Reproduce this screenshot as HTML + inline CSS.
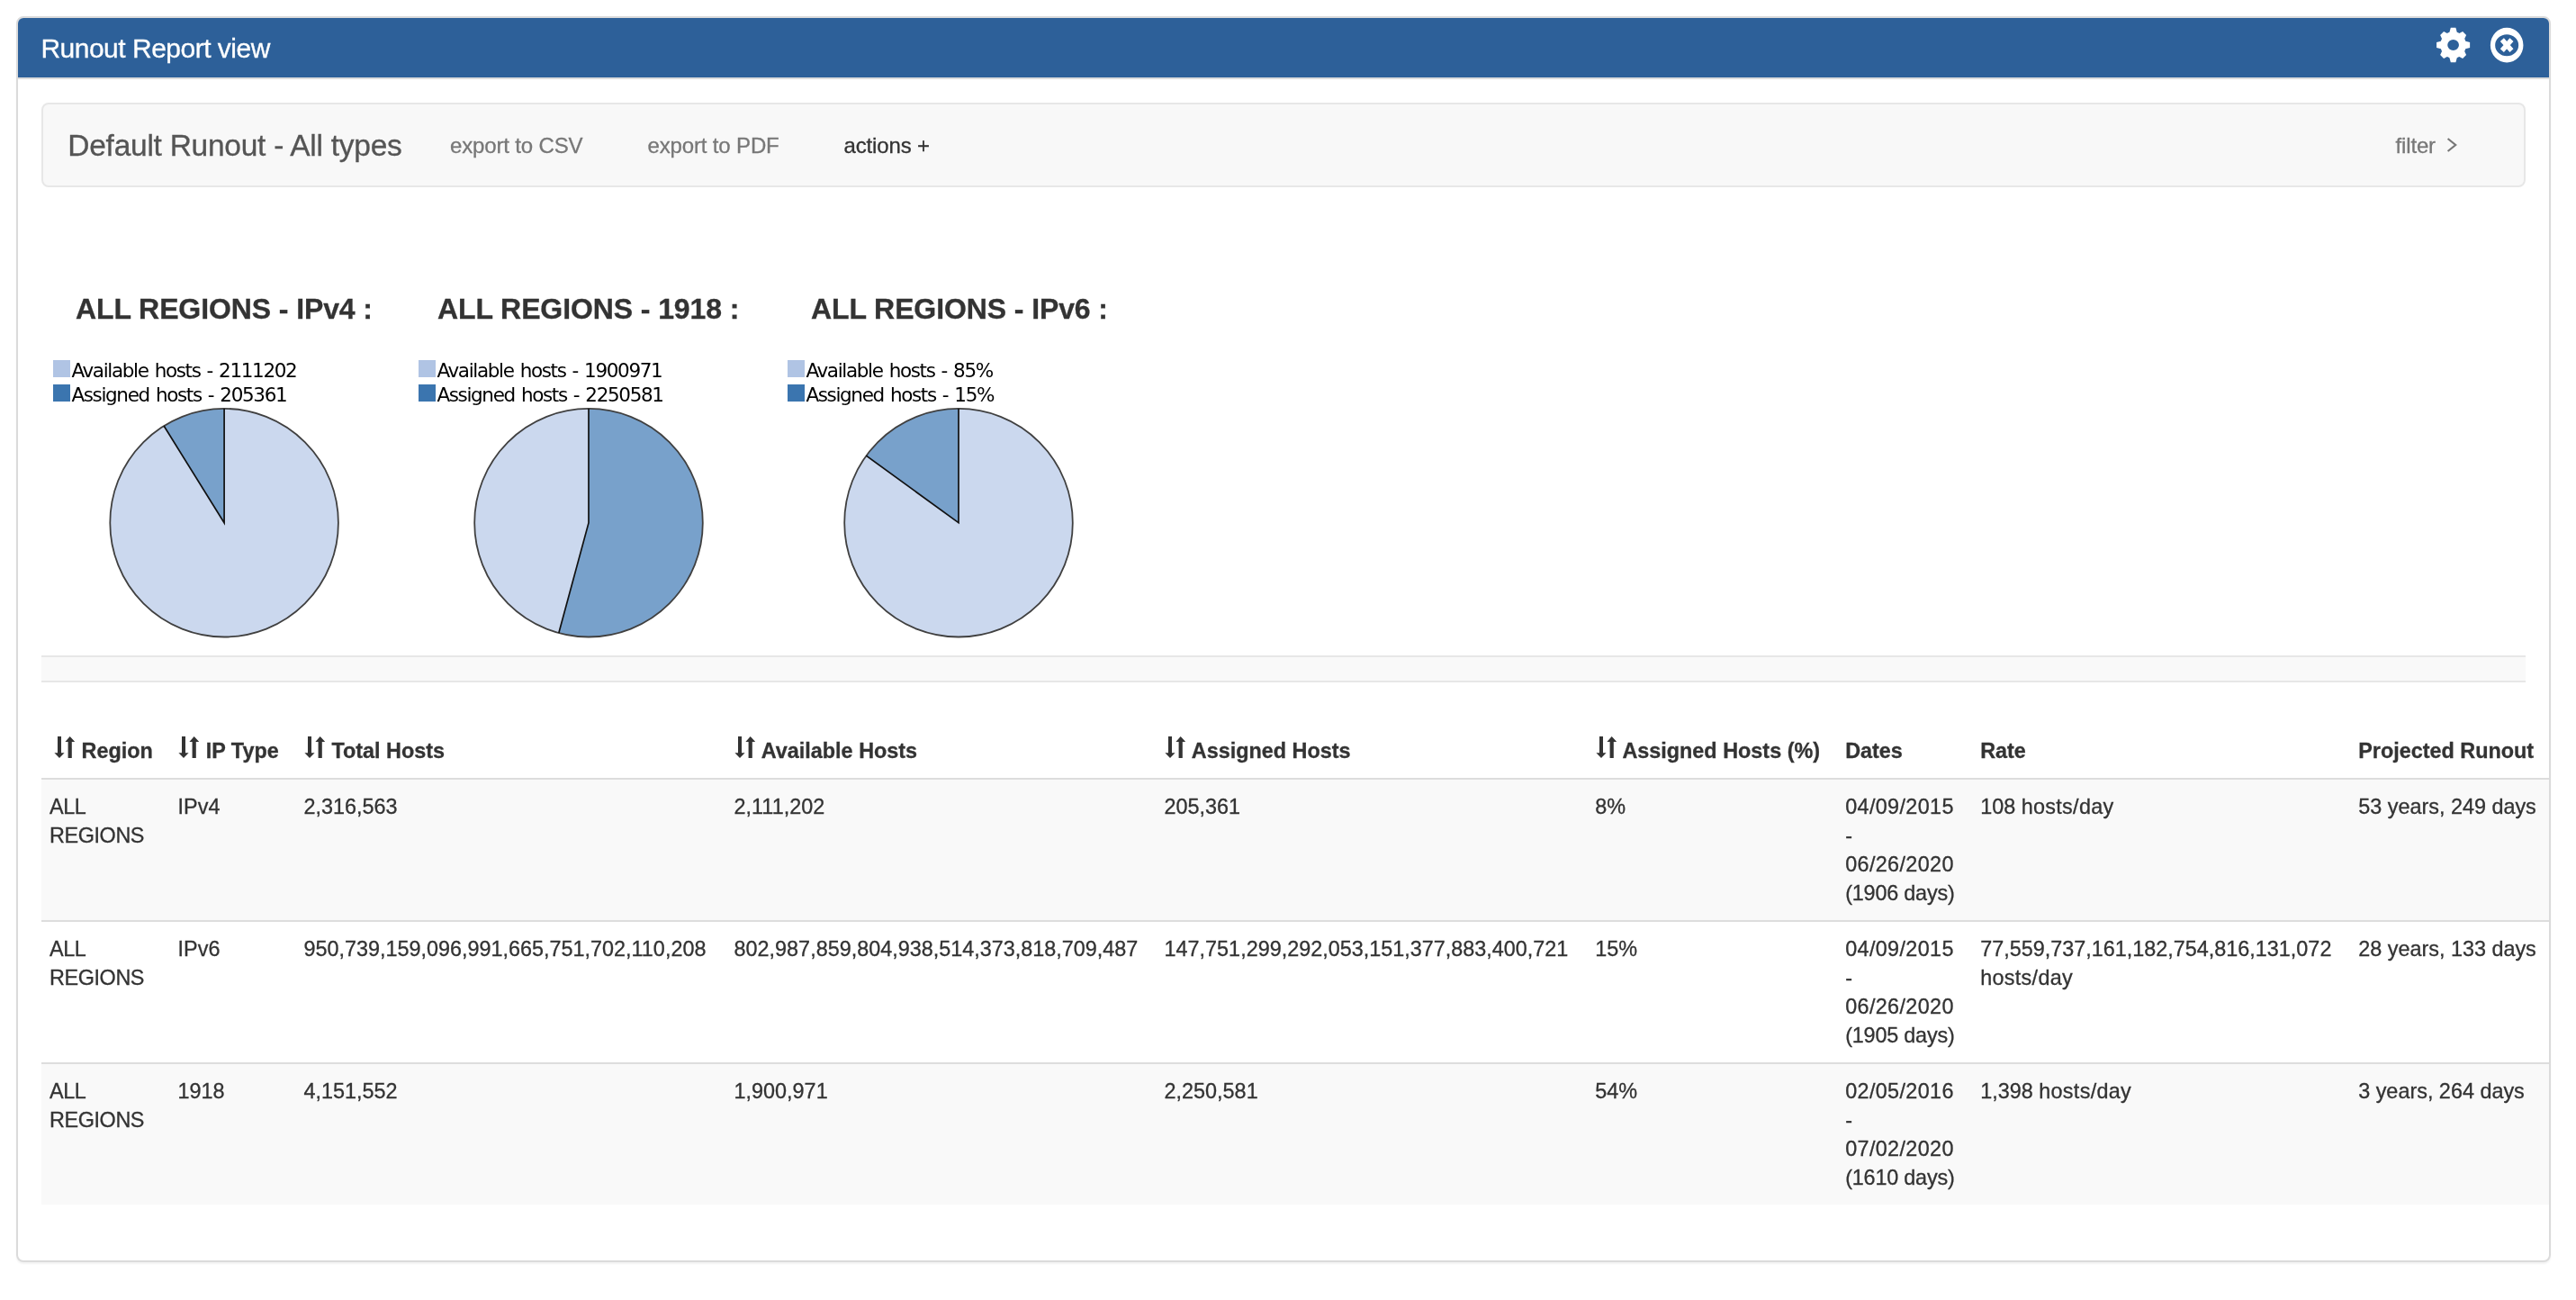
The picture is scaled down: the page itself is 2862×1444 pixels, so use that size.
<!DOCTYPE html>
<html>
<head>
<meta charset="utf-8">
<title>Runout Report view</title>
<style>
*{box-sizing:border-box;margin:0;padding:0}
html,body{width:2862px;height:1444px;background:#fff;overflow:hidden}
.panel,.nav,.charts,table{will-change:transform}
body{font-family:"Liberation Sans",Arial,Helvetica,sans-serif;color:#333;position:relative;-webkit-text-stroke:.3px currentColor}
.panel{position:absolute;left:18px;top:18px;width:2816px;height:1384px;border:2px solid #dbdbdb;border-radius:8px;background:#fff;box-shadow:0 2px 2px rgba(0,0,0,.05)}
.phead{position:absolute;left:0;top:0;right:0;height:68px;background:#2d6099;border-bottom:2px solid #dcdcdc;border-radius:6px 6px 0 0;color:#fff}
.phead .t{position:absolute;left:25.4px;top:13.6px;font-size:30px;line-height:40px;white-space:nowrap;letter-spacing:-.5px}
.phead svg{position:absolute;left:0;top:0}
.nav{position:absolute;left:46px;top:114px;width:2760px;height:94px;border:2px solid #e7e7e7;border-radius:8px;background:#f8f8f8}
.nav span{position:absolute;white-space:nowrap}
.brand{left:27.3px;top:26px;font-size:33.5px;line-height:40px;color:#555;letter-spacing:-.26px}
.lnk{font-size:24px;line-height:40px;top:26px;color:#777;letter-spacing:-.15px}
.nav svg{position:absolute;left:0;top:0}
.charts h3{position:absolute;font-size:32px;line-height:40px;font-weight:bold;color:#333;white-space:nowrap;letter-spacing:-.1px}
.pies{position:absolute;left:0;top:0}
.lg{position:absolute;top:398px;font-family:"DejaVu Sans","Liberation Sans",sans-serif;font-size:21.5px;line-height:27.3px;color:#000;white-space:nowrap;letter-spacing:-1.35px;-webkit-text-stroke:0}
.lg div{height:27.3px;position:relative}
.lg i{position:absolute;left:0;top:2.2px;width:18.5px;height:18.6px}
.lg span{position:absolute;left:20.4px;top:0;word-spacing:1.6px}
.strip{position:absolute;left:46px;top:728px;width:2760px;height:30px;background:#f9f9f9;border-top:2px solid #e7e7e7;border-bottom:2px solid #e7e7e7}
table{position:absolute;left:46px;top:800px;border-collapse:collapse;font-size:23.4px;line-height:32px;color:#333;table-layout:fixed;width:2786px}
th{text-align:left;font-weight:bold;padding:18px 9px 14px 9px;border-bottom:2px solid #ddd;white-space:nowrap;vertical-align:bottom}
td{padding:14px 9px;vertical-align:top;border-top:2px solid #ddd}
tbody tr:first-child td{border-top:0}
tbody tr:nth-child(odd) td{background:#f9f9f9}
.si{display:inline-block;vertical-align:baseline;margin:0 .8px -2px .4px}
th:first-child .si{margin-left:4.8px}
.c{letter-spacing:-.4px}
.d{letter-spacing:.35px}
.e{letter-spacing:-.2px}
.r{letter-spacing:.3px}
</style>
</head>
<body>
<div class="panel">
  <div class="phead"><span class="t">Runout Report view</span>
  <svg width="2812" height="66" viewBox="0 0 2812 66"><path transform="translate(2705.6 30) scale(0.965 1)" d="M-4.30 -14.16L-2.90 -19.20 L2.90 -19.20 L4.30 -14.16A14.80 14.80 0 0 1 6.97 -13.05L10.89 -14.99 L14.99 -10.89 L13.05 -6.97A14.80 14.80 0 0 1 14.16 -4.30L19.20 -2.90 L19.20 2.90 L14.16 4.30A14.80 14.80 0 0 1 13.05 6.97L14.99 10.89 L10.89 14.99 L6.97 13.05A14.80 14.80 0 0 1 4.30 14.16L2.90 19.20 L-2.90 19.20 L-4.30 14.16A14.80 14.80 0 0 1 -6.97 13.05L-10.89 14.99 L-14.99 10.89 L-13.05 6.97A14.80 14.80 0 0 1 -14.16 4.30L-19.20 2.90 L-19.20 -2.90 L-14.16 -4.30A14.80 14.80 0 0 1 -13.05 -6.97L-14.99 -10.89 L-10.89 -14.99 L-6.97 -13.05A14.80 14.80 0 0 1 -4.30 -14.16 ZM6.60 0A6.60 5.95 0 1 0 -6.60 0A6.60 5.95 0 1 0 6.60 0Z" fill="#fff" fill-rule="evenodd"/>
  <g transform="translate(2765.15 30.15)"><path fill="#fff" fill-rule="evenodd" d="M-18.3 0A18.3 19.3 0 1 0 18.3 0A18.3 19.3 0 1 0 -18.3 0ZM-13 0A13 12 0 1 0 13 0A13 12 0 1 0 -13 0Z"/><path d="M-5.3 -6L5.3 6M5.3 -6L-5.3 6" stroke="#fff" stroke-width="5.4" fill="none"/></g></svg>
  </div>
</div>
<div class="nav">
  <span class="brand">Default Runout - All types</span>
  <span class="lnk" style="left:452px">export to CSV</span>
  <span class="lnk" style="left:671.5px">export to PDF</span>
  <span class="lnk" style="left:889.5px;color:#333">actions +</span>
  <span class="lnk" style="left:2613.5px">filter</span>
  <svg width="2756" height="90" viewBox="0 0 2756 90"><path d="M2671.6 38L2680.2 45L2671.6 52" fill="none" stroke="#777" stroke-width="2.2"/></svg>
</div>
<div class="charts">
  <h3 style="left:84px;top:323px">ALL REGIONS - IPv4 :</h3>
  <h3 style="left:486px;top:323px">ALL REGIONS - 1918 :</h3>
  <h3 style="left:901px;top:323px">ALL REGIONS - IPv6 :</h3>
  <svg class="pies" width="1400" height="720" viewBox="0 0 1400 720"><circle cx="249.1" cy="580.7" r="126.8" fill="#cbd8ee"/><path d="M249.1 580.7 L182.07 473.07 A126.8 126.8 0 0 1 249.10 453.90 Z" fill="#78a1cb"/><circle cx="249.1" cy="580.7" r="126.8" fill="none" stroke="#404040" stroke-width="1.8"/><path d="M182.07 473.07 L249.1 580.7 L249.10 453.90" fill="none" stroke="#111" stroke-width="1.7" stroke-linejoin="miter"/><circle cx="654" cy="580.7" r="126.8" fill="#cbd8ee"/><path d="M654 580.7 L654.00 453.90 A126.8 126.8 0 1 1 620.84 703.09 Z" fill="#78a1cb"/><circle cx="654" cy="580.7" r="126.8" fill="none" stroke="#404040" stroke-width="1.8"/><path d="M654.00 453.90 L654 580.7 L620.84 703.09" fill="none" stroke="#111" stroke-width="1.7" stroke-linejoin="miter"/><circle cx="1065" cy="580.7" r="126.8" fill="#cbd8ee"/><path d="M1065 580.7 L962.42 506.17 A126.8 126.8 0 0 1 1065.00 453.90 Z" fill="#78a1cb"/><circle cx="1065" cy="580.7" r="126.8" fill="none" stroke="#404040" stroke-width="1.8"/><path d="M962.42 506.17 L1065 580.7 L1065.00 453.90" fill="none" stroke="#111" stroke-width="1.7" stroke-linejoin="miter"/></svg>
  <div class="lg" style="left:59px"><div><i style="background:#b0c4e4"></i><span>Available hosts - 2111202</span></div><div><i style="background:#3b75af"></i><span>Assigned hosts - 205361</span></div></div><div class="lg" style="left:465px"><div><i style="background:#b0c4e4"></i><span>Available hosts - 1900971</span></div><div><i style="background:#3b75af"></i><span>Assigned hosts - 2250581</span></div></div><div class="lg" style="left:875px"><div><i style="background:#b0c4e4"></i><span>Available hosts - 85%</span></div><div><i style="background:#3b75af"></i><span>Assigned hosts - 15%</span></div></div>
</div>
<div class="strip"></div>
<table>
<colgroup><col style="width:142.6px"><col style="width:139.8px"><col style="width:478.2px"><col style="width:478px"><col style="width:478.6px"><col style="width:278px"><col style="width:150px"><col style="width:420px"><col style="width:221px"></colgroup>
<thead><tr><th><svg class="si" width="23.4" height="26" viewBox="0 0 23.4 26"><path d="M4 0h4v18.2h3.6L6 24 0.4 18.2H4zM15.6 24h4.2V6h3.5L17.7 0 12.4 6h3.2z" fill="#333"/></svg> Region</th><th><svg class="si" width="23.4" height="26" viewBox="0 0 23.4 26"><path d="M4 0h4v18.2h3.6L6 24 0.4 18.2H4zM15.6 24h4.2V6h3.5L17.7 0 12.4 6h3.2z" fill="#333"/></svg> IP Type</th><th><svg class="si" width="23.4" height="26" viewBox="0 0 23.4 26"><path d="M4 0h4v18.2h3.6L6 24 0.4 18.2H4zM15.6 24h4.2V6h3.5L17.7 0 12.4 6h3.2z" fill="#333"/></svg> Total Hosts</th><th><svg class="si" width="23.4" height="26" viewBox="0 0 23.4 26"><path d="M4 0h4v18.2h3.6L6 24 0.4 18.2H4zM15.6 24h4.2V6h3.5L17.7 0 12.4 6h3.2z" fill="#333"/></svg> Available Hosts</th><th><svg class="si" width="23.4" height="26" viewBox="0 0 23.4 26"><path d="M4 0h4v18.2h3.6L6 24 0.4 18.2H4zM15.6 24h4.2V6h3.5L17.7 0 12.4 6h3.2z" fill="#333"/></svg> Assigned Hosts</th><th><svg class="si" width="23.4" height="26" viewBox="0 0 23.4 26"><path d="M4 0h4v18.2h3.6L6 24 0.4 18.2H4zM15.6 24h4.2V6h3.5L17.7 0 12.4 6h3.2z" fill="#333"/></svg> Assigned Hosts (%)</th><th>Dates</th><th>Rate</th><th>Projected Runout</th></tr></thead>
<tbody>
<tr><td class="c">ALL REGIONS</td><td>IPv4</td><td>2,316,563</td><td>2,111,202</td><td>205,361</td><td>8%</td><td><span class="d">04/09/2015</span><br>-<br><span class="d">06/26/2020</span><br><span class="e">(1906 days)</span></td><td>108 <span class="r">hosts/day</span></td><td>53 years, 249 days</td></tr>
<tr><td class="c">ALL REGIONS</td><td>IPv6</td><td>950,739,159,096,991,665,751,702,110,208</td><td>802,987,859,804,938,514,373,818,709,487</td><td>147,751,299,292,053,151,377,883,400,721</td><td>15%</td><td><span class="d">04/09/2015</span><br>-<br><span class="d">06/26/2020</span><br><span class="e">(1905 days)</span></td><td>77,559,737,161,182,754,816,131,072 <span class="r">hosts/day</span></td><td>28 years, 133 days</td></tr>
<tr><td class="c">ALL REGIONS</td><td>1918</td><td>4,151,552</td><td>1,900,971</td><td>2,250,581</td><td>54%</td><td><span class="d">02/05/2016</span><br>-<br><span class="d">07/02/2020</span><br><span class="e">(1610 days)</span></td><td>1,398 <span class="r">hosts/day</span></td><td>3 years, 264 days</td></tr>
</tbody>
</table>
</body>
</html>
